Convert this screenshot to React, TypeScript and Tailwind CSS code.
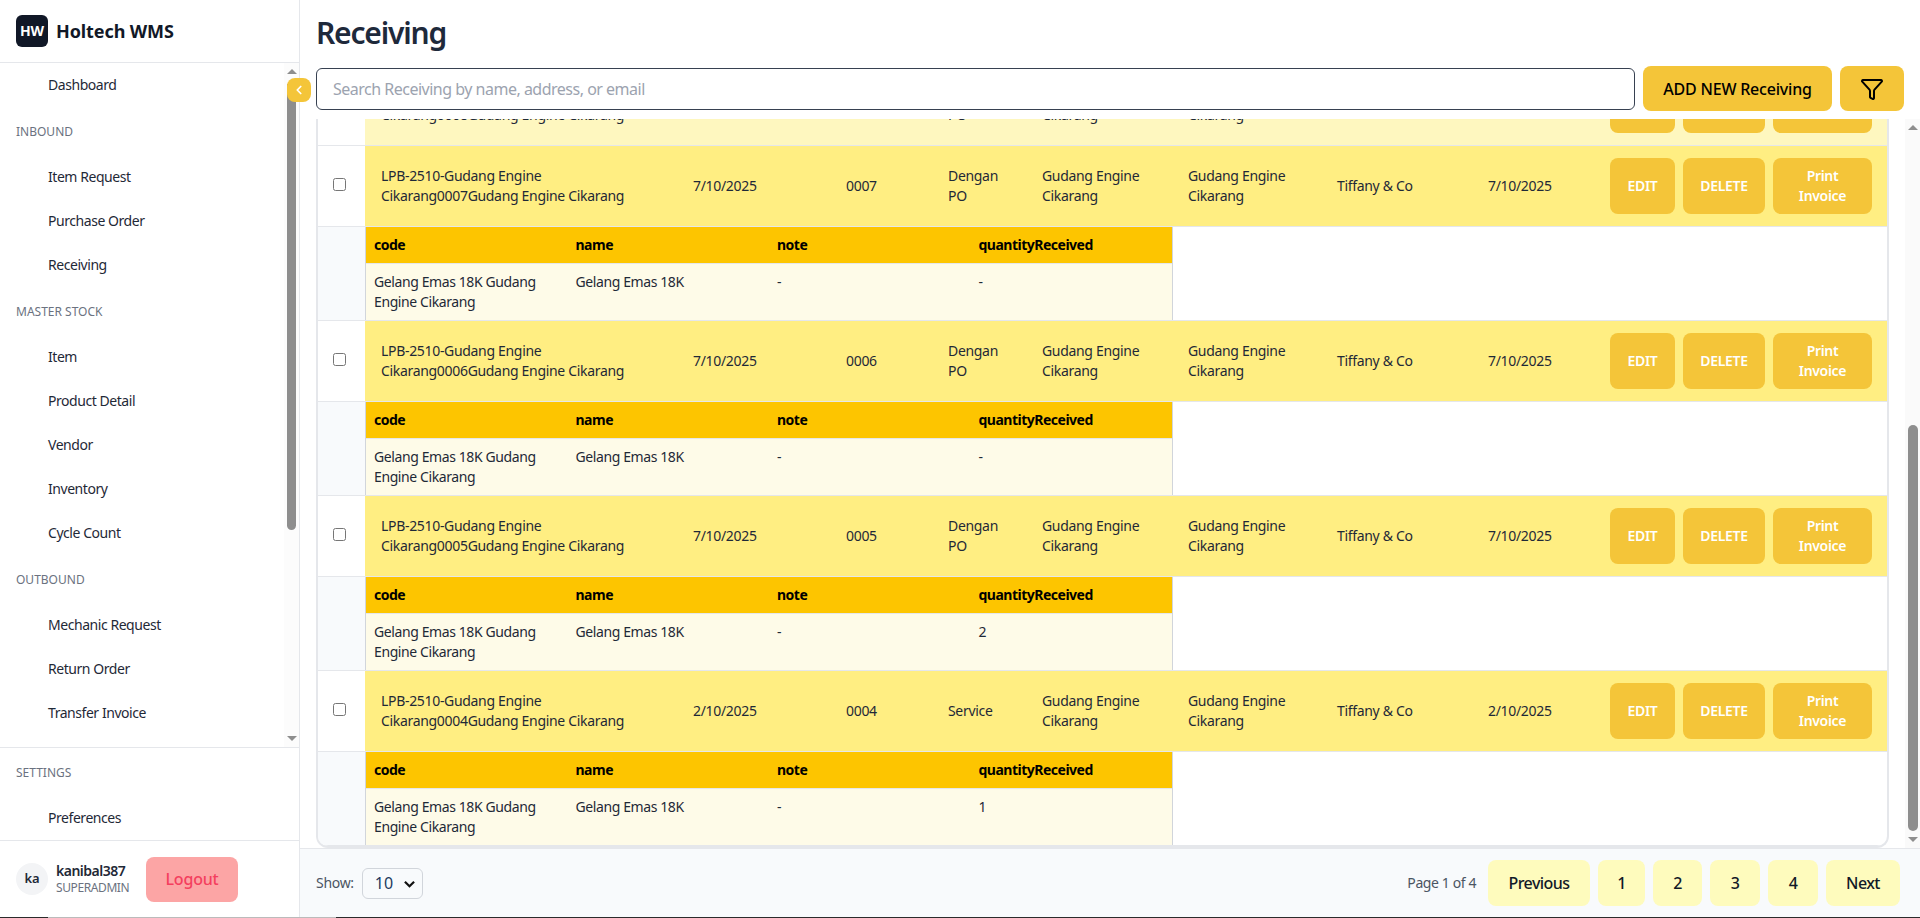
import { ChevronLeft, Filter } from 'lucide-react'

const navTop = [
  { type: 'item', label: 'Dashboard' },
  { type: 'head', label: 'INBOUND' },
  { type: 'item', label: 'Item Request' },
  { type: 'item', label: 'Purchase Order' },
  { type: 'item', label: 'Receiving' },
  { type: 'head', label: 'MASTER STOCK' },
  { type: 'item', label: 'Item' },
  { type: 'item', label: 'Product Detail' },
  { type: 'item', label: 'Vendor' },
  { type: 'item', label: 'Inventory' },
  { type: 'item', label: 'Cycle Count' },
  { type: 'head', label: 'OUTBOUND' },
  { type: 'item', label: 'Mechanic Request' },
  { type: 'item', label: 'Return Order' },
  { type: 'item', label: 'Transfer Invoice' },
]

const rows = [
  { no: '0007', date: '7/10/2025', kind: 'Dengan PO', qty: '-' },
  { no: '0006', date: '7/10/2025', kind: 'Dengan PO', qty: '-' },
  { no: '0005', date: '7/10/2025', kind: 'Dengan PO', qty: '2' },
  { no: '0004', date: '2/10/2025', kind: 'Service', qty: '1' },
]

function NavHead({ label }: { label: string }) {
  return <div className="h-[48px] flex items-center pl-4 pt-px text-xs tracking-normal text-[#6b7280]">{label}</div>
}

function NavItem({ label }: { label: string }) {
  return <div className="h-[44px] flex items-center pl-12 text-sm tracking-[-0.45px] text-[#1f2937]">{label}</div>
}

function Sidebar() {
  return (
    <aside className="w-[300px] shrink-0 flex flex-col bg-white border-r border-[#e5e7eb] relative z-10">
      <div className="h-[63px] shrink-0 flex items-center gap-2 pl-4 border-b border-[#e5e7eb]">
        <div className="w-8 h-8 rounded-md bg-[#111827] text-white text-sm font-bold tracking-normal flex items-center justify-center">HW</div>
        <span className="text-lg font-bold tracking-[-0.1px] text-[#111827]">Holtech WMS</span>
      </div>

      <nav className="relative h-[684px] shrink-0 overflow-hidden">
        {navTop.map((n) =>
          n.type === 'head' ? <NavHead key={n.label} label={n.label} /> : <NavItem key={n.label} label={n.label} />
        )}
        {/* scrollbar */}
        <div className="absolute top-0 right-0 bottom-0 w-[15px] bg-[#fcfcfc] flex flex-col items-center">
          <div className="mt-[6px] w-0 h-0 border-x-[5px] border-x-transparent border-b-[5px] border-b-[#8e8e8e]" />
          <div className="mt-[10px] w-[9px] h-[446px] bg-[#8e8e8e] rounded-b-[5px]" />
          <div className="mt-auto mb-[6px] w-0 h-0 border-x-[5px] border-x-transparent border-t-[5px] border-t-[#8e8e8e]" />
        </div>
      </nav>

      <div className="border-t border-[#e5e7eb]">
        <NavHead label="SETTINGS" />
        <NavItem label="Preferences" />
      </div>

      <div className="flex-1 border-t border-[#e5e7eb] flex items-center pl-4">
        <div className="w-8 h-8 rounded-full bg-[#f3f4f6] text-[13px] font-semibold text-[#1f2937] flex items-center justify-center">ka</div>
        <div className="ml-2 w-[90px]">
          <div className="text-sm leading-[18px] font-semibold tracking-[-0.5px] text-[#1f2937]">kanibal387</div>
          <div className="text-xs leading-4 tracking-[-0.4px] text-[#6b7280]">SUPERADMIN</div>
        </div>
        <button className="w-[92px] h-[45px] rounded-lg bg-[#fca5a5] text-[#f43f5e] text-base font-medium tracking-[-0.2px]">Logout</button>
      </div>

      <button className="absolute left-[287px] top-[78px] w-6 h-6 rounded-lg bg-[#f4c539] text-white flex items-center justify-center">
        <ChevronLeft size={14} strokeWidth={3} />
      </button>
    </aside>
  )
}

const rowCols = 'grid grid-cols-[47px_312px_153px_102px_94px_146px_149px_151px_122px_1fr] text-sm tracking-[-0.32px] text-[#1f2937] items-center'

function MainRow({ no, date, kind, light }: { no: string; date: string; kind: string; light?: boolean }) {
  const cell = 'h-full flex items-center pl-4 pr-4'
  return (
    <div className={`${rowCols} h-[80px] ${light ? 'bg-[linear-gradient(90deg,#ffffff_47px,#fef7bf_47px)]' : 'bg-[linear-gradient(90deg,#ffffff_47px,#ffee82_47px)]'}`}>
      <div className="pl-[15px] h-full flex items-center">
        <input type="checkbox" className="w-[13px] h-[13px] mb-[3px]" />
      </div>
      <div className={cell}>LPB-2510-Gudang Engine Cikarang{no}Gudang Engine Cikarang</div>
      <div className={cell}>{date}</div>
      <div className={cell}>{no}</div>
      <div className={cell}>{kind}</div>
      <div className={cell}>Gudang Engine Cikarang</div>
      <div className={cell}>Gudang Engine Cikarang</div>
      <div className={cell}>Tiffany &amp; Co</div>
      <div className={cell}>{date}</div>
      <div className="h-full flex items-center gap-2 pl-4">
        <button className="w-[65px] h-14 shrink-0 rounded-lg bg-[#f4c539] text-white font-semibold">EDIT</button>
        <button className="w-[82px] h-14 shrink-0 rounded-lg bg-[#f4c539] text-white font-semibold">DELETE</button>
        <button className={`w-[99px] h-14 shrink-0 rounded-lg bg-[#f4c539] font-semibold leading-5 px-4 ${light ? 'text-transparent' : 'text-white'}`}>Print Invoice</button>
      </div>
    </div>
  )
}

function SubRow({ qty }: { qty: string }) {
  return (
    <div className="flex h-[95px] border-y border-[#e5e7eb]">
      <div className="w-[47px] bg-[#f8fafc]" />
      <div className="w-[808px] border-x border-[#d1d5db] bg-[#fefbe8]">
        <div className="grid grid-cols-4 h-[36px] items-center bg-[#fdc500] text-sm font-bold tracking-[-0.5px] text-black">
          <div className="px-2">code</div>
          <div className="px-2">name</div>
          <div className="px-2">note</div>
          <div className="px-2">quantityReceived</div>
        </div>
        <div className="grid grid-cols-4 border-t border-[#e5e7eb] py-2 text-sm tracking-[-0.4px] text-[#1f2937]">
          <div className="px-2">Gelang Emas 18K Gudang Engine Cikarang</div>
          <div className="px-2">Gelang Emas 18K</div>
          <div className="px-2">-</div>
          <div className="px-2">{qty}</div>
        </div>
      </div>
    </div>
  )
}

const pageButtons = [
  { label: 'Previous', width: 'w-[102px]' },
  { label: '1', width: 'w-[47px]' },
  { label: '2', width: 'w-[49px]' },
  { label: '3', width: 'w-[50px]' },
  { label: '4', width: 'w-[50px]' },
  { label: 'Next', width: 'w-[74px]' },
]

export default function App() {
  return (
    <div className="w-[1920px] h-[918px] overflow-hidden flex flex-col font-['Noto_Sans',sans-serif]">
      <div className="flex flex-1 min-h-0">
        <Sidebar />

        <main className="flex-1 min-w-0 flex flex-col bg-white relative">
          <h1 className="h-[66px] shrink-0 flex items-center pl-4 text-3xl font-semibold tracking-[-1.2px] text-[#1e293b]">Receiving</h1>

          <div className="h-[53px] shrink-0 flex items-start gap-2 px-4">
            <input
              placeholder="Search Receiving by name, address, or email"
              className="flex-1 h-[42px] mt-[2px] px-4 rounded-md border border-[#374151] bg-white text-base tracking-[-0.5px] placeholder:text-[#9ca3af]"
            />
            <button className="w-[189px] h-[45px] rounded-lg bg-[#f4c539] text-base font-medium tracking-[-0.2px] text-black">ADD NEW Receiving</button>
            <button className="w-16 h-[45px] rounded-lg bg-[#f4c539] text-black flex items-center justify-center">
              <Filter size={24} strokeWidth={2} />
            </button>
          </div>

          {/* table scroll area, clipped at the top */}
          <div className="flex-1 min-h-0 ml-4 mr-[31px] overflow-hidden flex flex-col justify-end border-2 border-t-0 border-[#e5e7eb] rounded-b-xl">
            <div className="shrink-0">
              <MainRow no="0008" date="7/10/2025" kind="Dengan PO" light />
              <div className="h-px bg-[#e5e7eb]" />
              {rows.map((r) => (
                <div key={r.no}>
                  <MainRow no={r.no} date={r.date} kind={r.kind} />
                  <SubRow qty={r.qty} />
                </div>
              ))}
            </div>
          </div>

          {/* scrollbar */}
          <div className="absolute right-0 top-[119px] h-[729px] w-[15px] bg-[#fafafa] flex flex-col items-center">
            <div className="mt-[6px] w-0 h-0 border-x-[5px] border-x-transparent border-b-[5px] border-b-[#8e8e8e]" />
            <div className="mt-[295px] w-[10px] h-[406px] bg-[#8e8e8e] rounded-[5px]" />
            <div className="mt-auto mb-[6px] w-0 h-0 border-x-[5px] border-x-transparent border-t-[5px] border-t-[#8e8e8e]" />
          </div>

          <footer className="h-[69px] shrink-0 border-t border-[#e5e7eb] bg-[#f8fafc] flex items-center pl-4 pr-5">
            <span className="text-sm tracking-[-0.3px] text-[#4b5563]">Show:</span>
            <div className="relative ml-[8px]">
              <select className="w-[61px] h-[31px] pl-3 appearance-none rounded-md border border-[#d1d5db] bg-[#f8fafc] text-base text-[#1e3a5f]">
                <option>10</option>
              </select>
              <svg viewBox="0 0 12 8" className="absolute right-[8px] top-[12px] w-[11px] h-[8px] pointer-events-none" fill="none" stroke="#111" strokeWidth="2.4">
                <path d="M1 1.5l5 5 5-5" />
              </svg>
            </div>
            <span className="ml-auto mr-3 text-sm tracking-[-0.4px] text-[#4b5563]">Page 1 of 4</span>
            <div className="flex gap-2">
              {pageButtons.map((b) => (
                <button key={b.label} className={`h-[46px] rounded-lg bg-[#fefbbd] text-base font-medium tracking-[-0.55px] text-[#111827] ${b.width}`}>
                  {b.label}
                </button>
              ))}
            </div>
          </footer>
        </main>
      </div>
      {/* bottom edge strip */}
      <div className="h-px shrink-0 flex bg-[#2b2b2b]">
        <div className="w-[48px]" />
        <div className="w-[288px] bg-[#bbbbbb]" />
      </div>
    </div>
  )
}
